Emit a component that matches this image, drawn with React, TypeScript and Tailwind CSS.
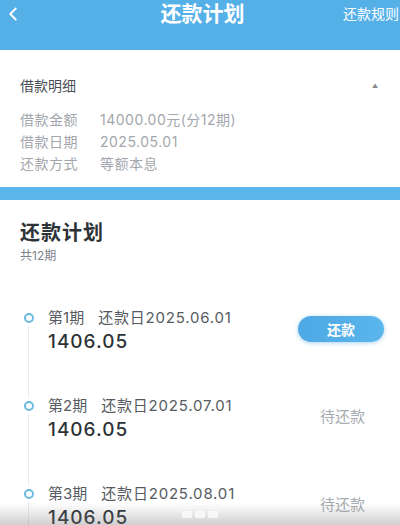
import { ChevronLeft } from 'lucide-react';

const FONT = { fontFamily: 'Inter, "Noto Sans CJK SC", "Noto Sans", sans-serif' };

const LOAN_ROWS = [
  { label: '借款金额', value: '14000.00元(分12期)' },
  { label: '借款日期', value: '2025.05.01' },
  { label: '还款方式', value: '等额本息' },
];

const PLAN = [
  { period: 1, date: '2025.06.01', amount: '1406.05', due: true },
  { period: 2, date: '2025.07.01', amount: '1406.05', due: false },
  { period: 3, date: '2025.08.01', amount: '1406.05', due: false },
];

export default function App() {
  return (
    <div className="relative w-[400px] h-[525px] overflow-hidden bg-[#5cb6ec]" style={FONT}>
      {/* Header */}
      <div className="h-[50px] bg-[#55b0e8] flex items-start relative">
        <div className="w-[40px] h-[28px] flex items-center pl-[2px]">
          <ChevronLeft size={22} strokeWidth={2} className="text-white" />
        </div>
        <div className="flex-1 text-center text-white text-[21px] font-bold leading-[28px] pl-[22px]">还款计划</div>
        <div className="w-[57px] text-white text-[14px] leading-[28px] whitespace-nowrap overflow-hidden">还款规则</div>
      </div>

      {/* Loan details */}
      <div className="bg-white h-[137px] px-5 pt-[26px]">
        <div className="flex items-center justify-between h-[18px]">
          <span className="text-[14px] text-[#4a4f57]">借款明细</span>
          <span className="text-[6px] text-[#888] mr-[2px]">▲</span>
        </div>
        <div className="mt-[16px] flex flex-col gap-[4px]">
          {LOAN_ROWS.map((r) => (
            <div key={r.label} className="flex h-[18px] items-center text-[14px] text-[#a3a7ad]">
              <span className="w-[80px] tracking-[0.5px]">{r.label}</span>
              <span className="tracking-[0.5px]">{r.value}</span>
            </div>
          ))}
        </div>
      </div>

      {/* Plan card */}
      <div className="mt-[13px] bg-white h-[330px] px-5 pt-[20px]">
        <div className="text-[20px] font-bold text-[#2e3338] leading-[26px] tracking-[1px]">还款计划</div>
        <div className="text-[12px] text-[#7d8288] leading-[16px] mt-[2px]">共12期</div>

        <div className="mt-[45px] flex flex-col">
          {PLAN.map((p) => (
            <div key={p.period} className="flex h-[88px]">
              <div className="w-[28px] flex flex-col items-start">
                <div className="h-[18px] flex items-center pl-[4px]">
                  <span className="w-[10px] h-[10px] rounded-full border-[2px] border-[#6bbbe0]" />
                </div>
                <div className="ml-[8px] flex-1 border-l border-dotted border-[#d6dadf]" />
              </div>
              <div className="flex-1 flex items-start justify-between">
                <div>
                  <div className="text-[15px] text-[#565b61] leading-[18px]">
                    第{p.period}期<span className="ml-[14px] tracking-[0.8px]">还款日{p.date}</span>
                  </div>
                  <div className="text-[19px] font-medium text-[#2e3338] leading-[26px] mt-[2px] tracking-[1px]">{p.amount}</div>
                </div>
                {p.due ? (
                  <button className="mt-[7px] mr-[-4px] w-[86px] h-[26px] rounded-full bg-gradient-to-r from-[#4ea8e4] to-[#5ab6ec] text-white text-[14px] font-bold shadow-[0_1px_4px_rgba(80,170,230,0.5)]">
                    还款
                  </button>
                ) : (
                  <span className="pt-[11px] mr-[15px] text-[15px] text-[#a8acb1] leading-[18px]">待还款</span>
                )}
              </div>
            </div>
          ))}
        </div>
      </div>

      {/* Bottom system gradient */}
      <div className="absolute left-0 right-0 bottom-0 h-[22px] bg-gradient-to-b from-transparent to-[rgba(120,120,120,0.35)] flex justify-center items-center gap-[3px]">
        <span className="w-[10px] h-[7px] bg-white/70 rounded-[1px]" />
        <span className="w-[10px] h-[7px] bg-white/70 rounded-[1px]" />
        <span className="w-[10px] h-[7px] bg-white/70 rounded-[1px]" />
      </div>
    </div>
  );
}
